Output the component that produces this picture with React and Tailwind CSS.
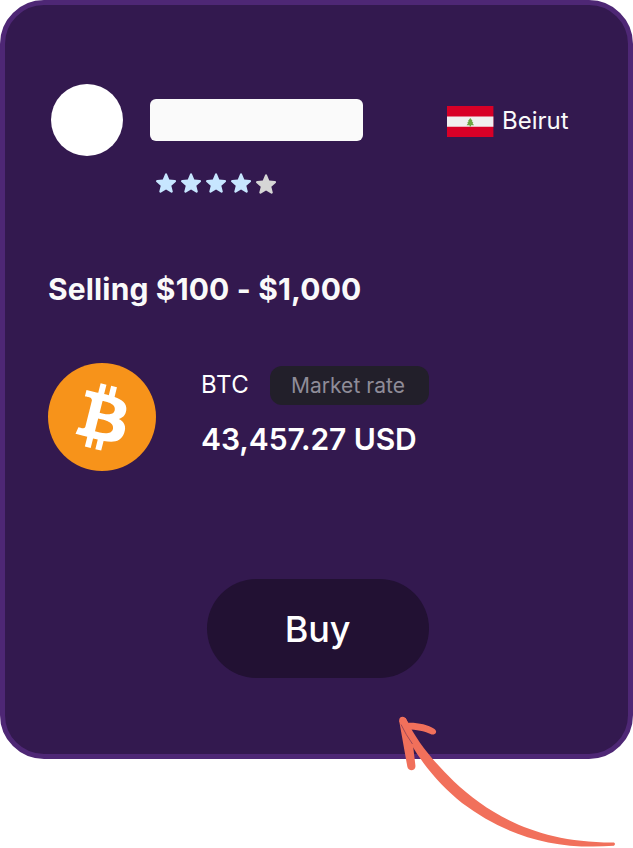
const STAR =
  "M10 0.6c.5 0 .8.3 1 .8l2 4.9 5.2.4c1.1.1 1.5 1.2.7 1.9l-4 3.4 1.3 5.100c.3 1.100-.7 1.800-1.600 1.200L10 15.500l-4.600 2.800c-.9.6-1.900-.1-1.600-1.200l1.300-5.100-4-3.400c-.8-.7-.4-1.800.7-1.900l5.200-.4 2-4.900c.2-.5.5-.8 1-.8z";

function Star({ filled }) {
  return (
    <svg
      viewBox="0 0.3 19 18.5"
      className={filled ? "h-5 w-[21px] text-[#c7e6ff]" : "mt-px h-5 w-[21px] text-[#d6d6d6]"}
    >
      <path d={STAR} fill="currentColor" />
    </svg>
  );
}

function LebanonFlag() {
  return (
    <svg viewBox="0 0 47 31" className="h-[31px] w-[47px]">
      <path d="M0 0h46.400v31H0z" fill="#d80027" />
      <path d="M0 10.500h46.400v10.300H0z" fill="#f0f0f0" />
      <path d="M23.300 12l-2.300 3.100h.8l-1.600 2h.9l-1.500 2.100h3v1.300h1.400v-1.300h3l-1.500-2.100h.9l-1.600-2h.8z" fill="#6da544" />
    </svg>
  );
}

function Bitcoin() {
  return (
    <svg viewBox="0 0 32 32" className="size-[108px] shrink-0">
      <circle cx="16" cy="16" r="16" fill="#f7931a" />
      <path
        fill="#fff"
        d="M23.189 14.02c.314-2.096-1.283-3.223-3.465-3.975l.708-2.84-1.728-.43-.69 2.765c-.454-.114-.92-.22-1.385-.326l.695-2.783L15.596 6l-.708 2.839c-.376-.086-.746-.17-1.104-.26l.002-.009-2.384-.595-.46 1.846s1.283.294 1.256.312c.7.175.826.638.805 1.006l-.806 3.235c.048.012.11.03.18.057l-.183-.045-1.13 4.532c-.086.212-.303.531-.793.41.018.025-1.256-.313-1.256-.313l-.858 1.978 2.25.561c.418.105.828.215 1.231.318l-.715 2.872 1.727.43.708-2.84c.472.127.93.245 1.378.357l-.706 2.828 1.728.43.715-2.866c2.948.558 5.164.333 6.097-2.333.752-2.146-.037-3.385-1.588-4.192 1.13-.26 1.98-1.003 2.207-2.538zm-3.95 5.538c-.533 2.147-4.148.986-5.32.695l.95-3.805c1.172.293 4.929.872 4.37 3.11zm.535-5.569c-.487 1.953-3.495.96-4.47.717l.86-3.45c.975.243 4.118.696 3.61 2.733z"
      />
    </svg>
  );
}

function Arrow() {
  return (
    <svg viewBox="396 712 224 136" className="absolute top-[712px] left-[396px] h-[136px] w-[224px]" fill="#f1705b">
      <path d="M399.200 721C398.500 716 405 715.500 406.500 719.500C417 742 434 762 454 781.500C489 814 536 843 614 842.500Q616 844 614 845.800C552 850.500 504 834.500 462 803C436 782 414 755 399.200 721Z" />
      <path d="M399.200 721L407.300 766.500C408.300 772 416.200 771 415.400 765.500L411 728L405.500 718Z" />
      <path d="M405 723C415 722 427 724 434.500 729C438.500 732 434.500 736 430.500 734C424 731 417 729.500 407 729.500Z" />
      <path d="M401 724.500Q406 735 412.500 744" fill="none" stroke="#8b3f54" strokeWidth="0.8" />
    </svg>
  );
}

export default function App() {
  return (
    <div className="relative h-[848px] w-[633px] overflow-hidden bg-white font-['Inter',sans-serif] text-white">
      <main className="flex h-[759px] flex-col rounded-[44px] border-[5px] border-[#4e2775] bg-[#33194f] px-[43px] pt-[79px]">
        <header className="flex h-[72px] items-center pl-[3px]">
          <div className="size-[72px] rounded-full bg-white" />
          <div className="ml-[27px] h-[42px] w-[213px] rounded-[6px] bg-[#fafafa]" />
          <div className="ml-[84px] flex items-center gap-[8px] pt-[2px]">
            <LebanonFlag />
            <span className="text-[24px] leading-[30px] whitespace-nowrap text-[#fafafa]">Beirut</span>
          </div>
        </header>
        <div className="mt-[17px] ml-[107px] flex h-[21px] gap-[4px]">
          <Star filled />
          <Star filled />
          <Star filled />
          <Star filled />
          <Star />
        </div>
        <h1 className="mt-[77px] text-[30px] leading-[36px] font-bold tracking-[0.15px] whitespace-nowrap text-[#fafafa]">
          Selling $100 - $1,000
        </h1>
        <section className="mt-[56px] flex gap-[45px]">
          <Bitcoin />
          <div className="pt-[2px]">
            <div className="flex h-[40px] items-center">
              <span className="w-[69px] text-[24px] leading-[30px] tracking-[0.6px]">BTC</span>
              <span className="flex h-[39px] w-[159px] items-center justify-center rounded-[12px] bg-[#221f2a] pt-[2px] pr-[3px] text-[21px] tracking-[0.05px] whitespace-nowrap text-[#8f8c98]">
                Market rate
              </span>
            </div>
            <p className="mt-[16px] text-[30px] leading-[36px] font-semibold tracking-[-0.08px] whitespace-nowrap">43,457.27 USD</p>
          </div>
        </section>
        <button className="mt-[108px] ml-[159px] flex h-[99px] w-[222px] items-center justify-center rounded-full bg-[#221133] pr-px text-[36px] font-medium tracking-[-0.2px]">
          Buy
        </button>
      </main>
      <Arrow />
    </div>
  );
}
